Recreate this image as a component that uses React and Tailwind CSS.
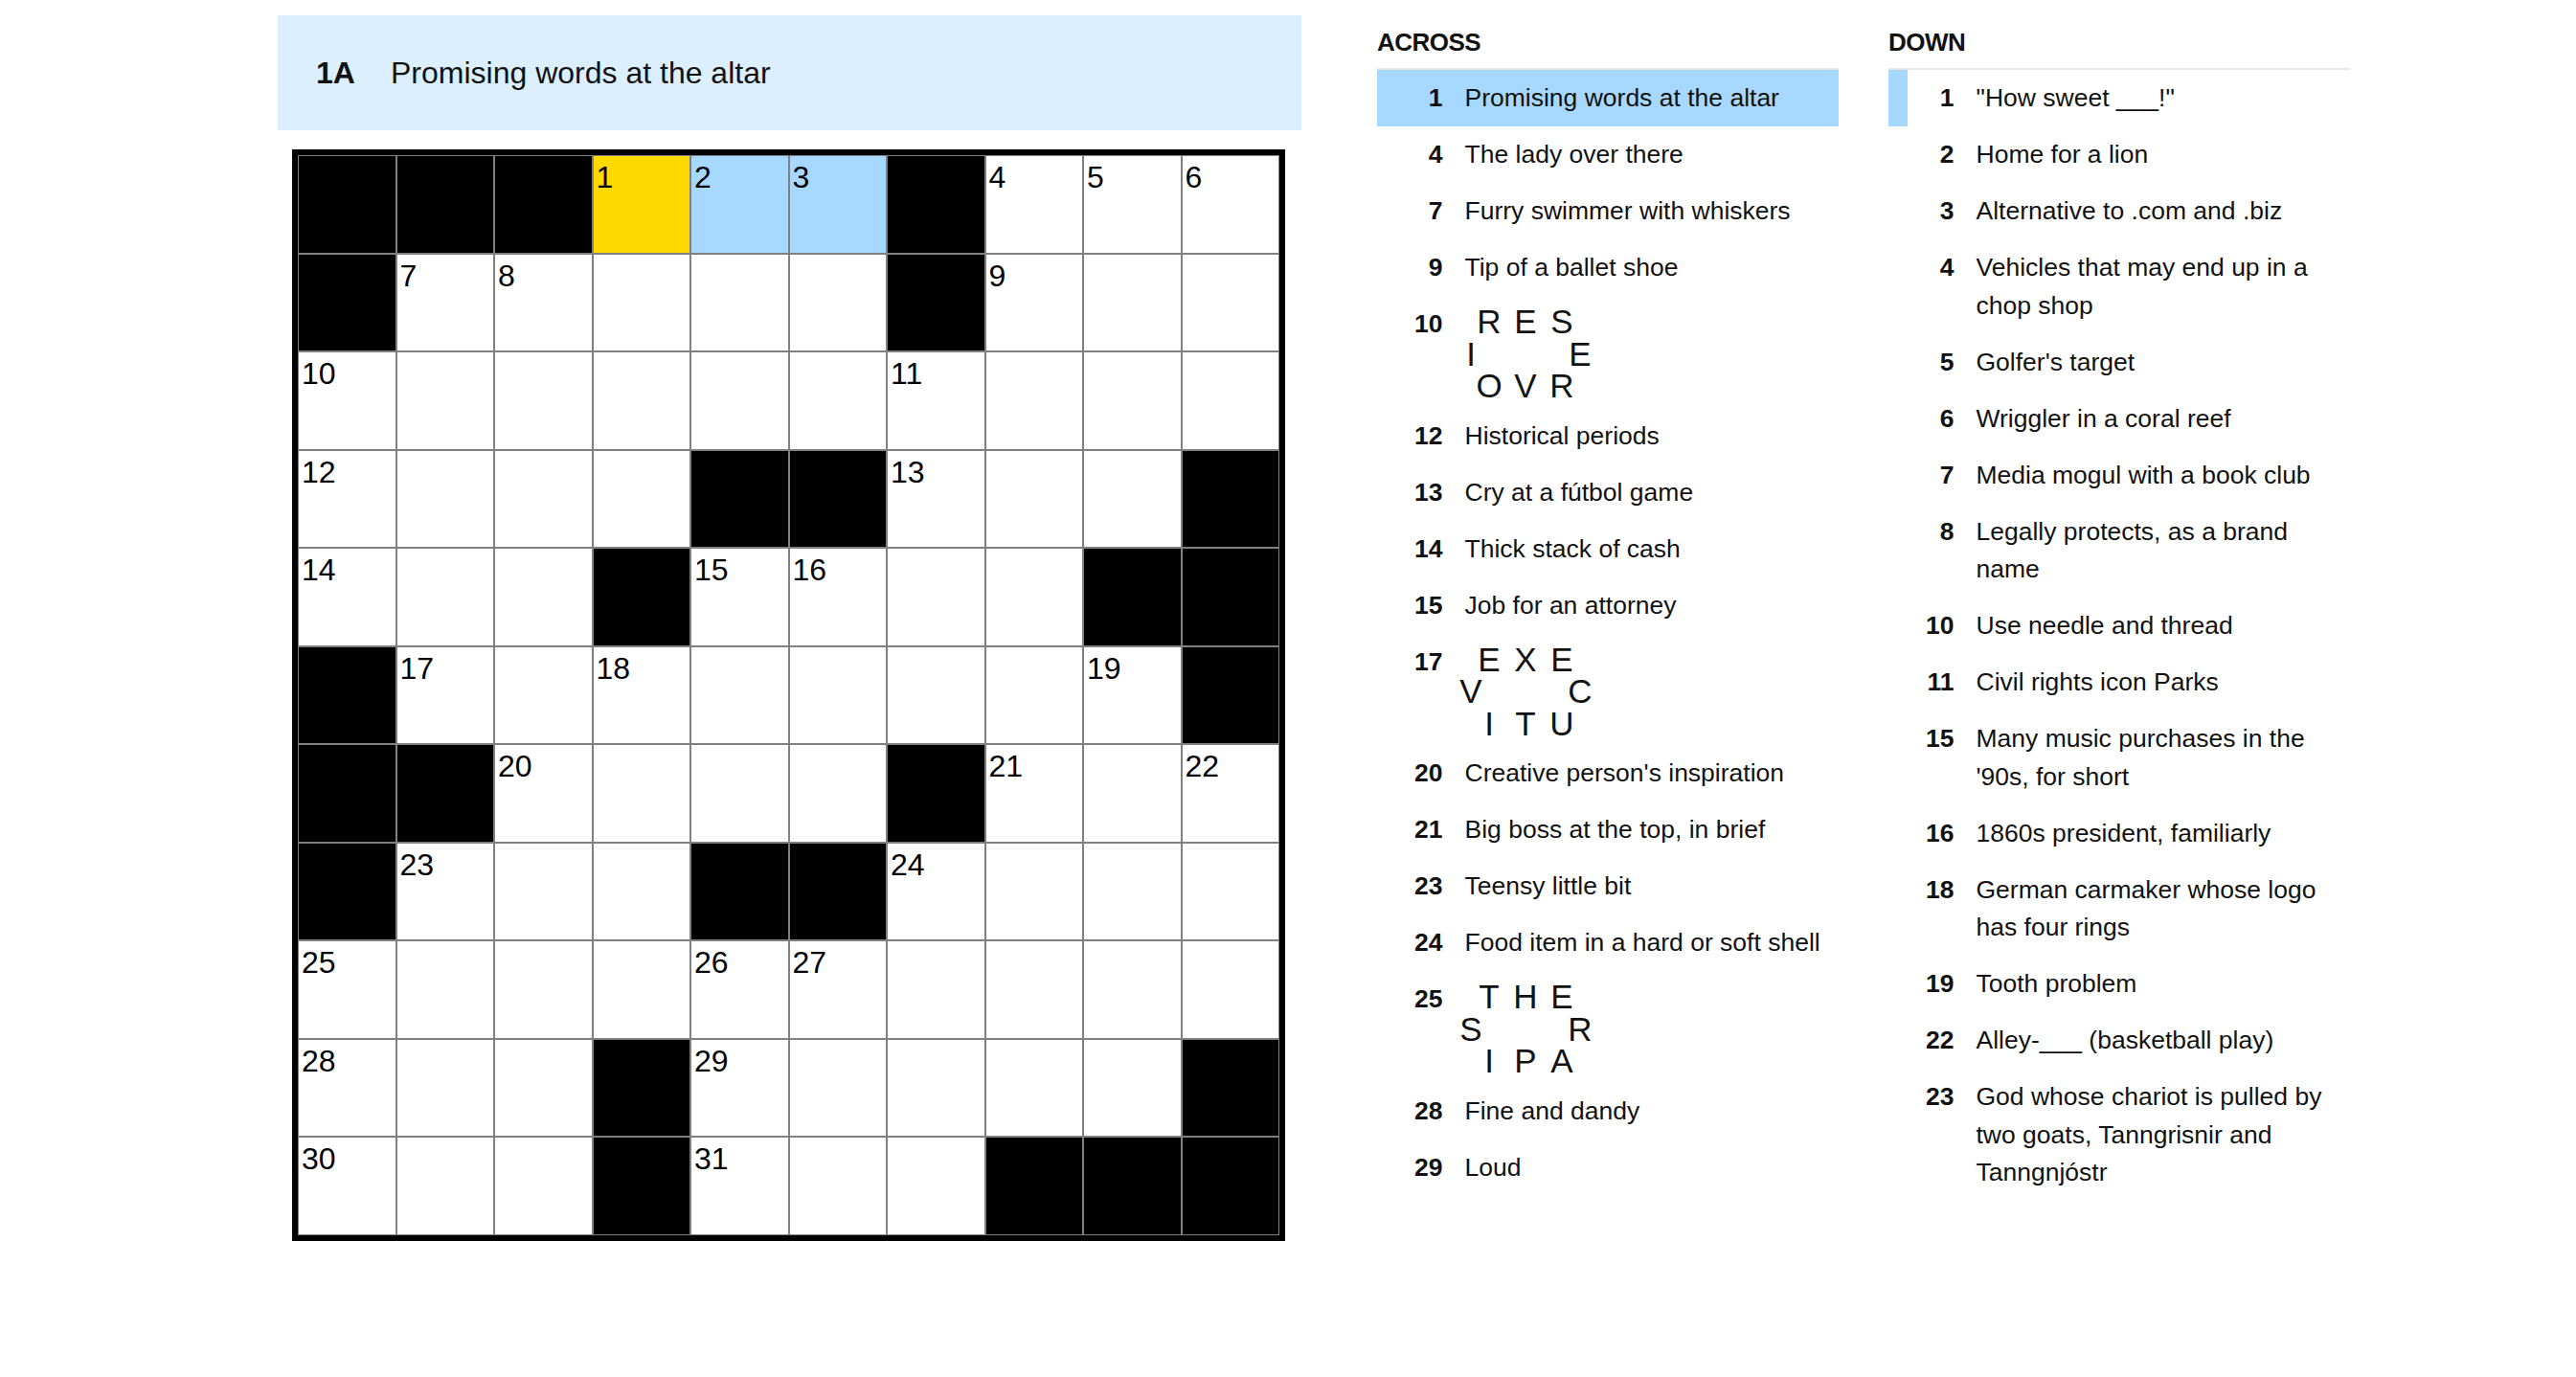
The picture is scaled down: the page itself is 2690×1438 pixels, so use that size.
import React from 'react';

// '#' = block, '.' = open square, number = numbered square
const GRID = [
  '# # # 1 2 3 # 4 5 6',
  '# 7 8 . . . # 9 . .',
  '10 . . . . . 11 . . .',
  '12 . . . # # 13 . . #',
  '14 . . # 15 16 . . # #',
  '# 17 . 18 . . . . 19 #',
  '# # 20 . . . # 21 . 22',
  '# 23 . . # # 24 . . .',
  '25 . . . 26 27 . . . .',
  '28 . . # 29 . . . . #',
  '30 . . # 31 . . # # #',
].map((row) => row.split(' '));

const ACTIVE = '0-3';
const WORD = ['0-4', '0-5'];

const ACROSS = [
  { n: 1, text: 'Promising words at the altar', active: true },
  { n: 4, text: 'The lady over there' },
  { n: 7, text: 'Furry swimmer with whiskers' },
  { n: 9, text: 'Tip of a ballet shoe' },
  { n: 10, ring: [' R E S ', 'I     E', ' O V R '] },
  { n: 12, text: 'Historical periods' },
  { n: 13, text: 'Cry at a fútbol game' },
  { n: 14, text: 'Thick stack of cash' },
  { n: 15, text: 'Job for an attorney' },
  { n: 17, ring: [' E X E ', 'V     C', ' I T U '] },
  { n: 20, text: "Creative person's inspiration" },
  { n: 21, text: 'Big boss at the top, in brief' },
  { n: 23, text: 'Teensy little bit' },
  { n: 24, text: 'Food item in a hard or soft shell' },
  { n: 25, ring: [' T H E ', 'S     R', ' I P A '] },
  { n: 28, text: 'Fine and dandy' },
  { n: 29, text: 'Loud' },
];

const DOWN = [
  { n: 1, text: '"How sweet ___!"', cross: true },
  { n: 2, text: 'Home for a lion' },
  { n: 3, text: 'Alternative to .com and .biz' },
  { n: 4, text: 'Vehicles that may end up in a chop shop' },
  { n: 5, text: "Golfer's target" },
  { n: 6, text: 'Wriggler in a coral reef' },
  { n: 7, text: 'Media mogul with a book club' },
  { n: 8, text: 'Legally protects, as a brand name' },
  { n: 10, text: 'Use needle and thread' },
  { n: 11, text: 'Civil rights icon Parks' },
  { n: 15, text: "Many music purchases in the '90s, for short" },
  { n: 16, text: '1860s president, familiarly' },
  { n: 18, text: 'German carmaker whose logo has four rings' },
  { n: 19, text: 'Tooth problem' },
  { n: 22, text: 'Alley-___ (basketball play)' },
  { n: 23, text: 'God whose chariot is pulled by two goats, Tanngrisnir and Tanngnjóstr' },
];

function Cell({ value, id }) {
  const block = value === '#';
  let bg = 'bg-white';
  if (block) bg = 'bg-black';
  else if (id === ACTIVE) bg = 'bg-[#ffda00]';
  else if (WORD.includes(id)) bg = 'bg-[#a7d8ff]';
  const num = !block && value !== '.' ? value : null;
  return (
    <div className={`relative border border-[#808080] ${bg}`}>
      {num && (
        <span className="absolute left-[3px] top-[6px] text-[32px] leading-none text-black">
          {num}
        </span>
      )}
    </div>
  );
}

function Board() {
  return (
    <div className="ml-[15px] mt-[20.5px] w-fit border-[6px] border-black">
      <div className="grid grid-cols-[repeat(10,102.5px)] grid-rows-[repeat(11,102.5px)]">
        {GRID.map((row, r) =>
          row.map((v, c) => <Cell key={`${r}-${c}`} id={`${r}-${c}`} value={v} />)
        )}
      </div>
    </div>
  );
}

function Ring({ lines }) {
  return (
    <div className="-ml-[3px] grid h-[97px] grid-cols-[repeat(7,19px)] text-[35px] leading-[33.5px]">
      {lines.map((line, r) =>
        line.split('').map((ch, c) => (
          <span key={`${r}-${c}`} className="flex justify-center">
            {ch.trim()}
          </span>
        ))
      )}
    </div>
  );
}

function ClueList({ title, clues }) {
  return (
    <div className="w-[482px] pt-[15.3px]">
      <h3 className="border-b-2 border-[#e6e6e6] pb-[14px] text-[26px] font-bold leading-[26px] tracking-[-0.02em]">
        {title}
      </h3>
      <ul>
        {clues.map((c) => (
          <li
            key={c.n}
            className={`flex items-start border-l-[20px] py-[9.75px] leading-[39.5px] ${
              c.active
                ? 'border-[#a7d8ff] bg-[#a7d8ff]'
                : c.cross
                ? 'border-[#a7d8ff]'
                : 'border-transparent'
            }`}
          >
            <span className="w-[48.5px] shrink-0 text-right font-bold">{c.n}</span>
            <div className="ml-[23px] flex-1">
              {c.ring ? <Ring lines={c.ring} /> : c.text}
            </div>
          </li>
        ))}
      </ul>
    </div>
  );
}

export default function App() {
  return (
    <div className="flex min-h-screen bg-white pl-[290px] pt-[16px] font-['Liberation_Sans',Arial,sans-serif] text-[26.5px] text-[#121212]">
      <div className="w-[1069px] shrink-0">
        <div className="flex h-[119.5px] items-center bg-[#dcefff] pl-[40px] text-[32px]">
          <span className="w-[78px] shrink-0 font-bold">1A</span>
          <span>Promising words at the altar</span>
        </div>
        <Board />
      </div>
      <div className="ml-[79px] flex gap-[52px]">
        <ClueList title="ACROSS" clues={ACROSS} />
        <ClueList title="DOWN" clues={DOWN} />
      </div>
    </div>
  );
}
